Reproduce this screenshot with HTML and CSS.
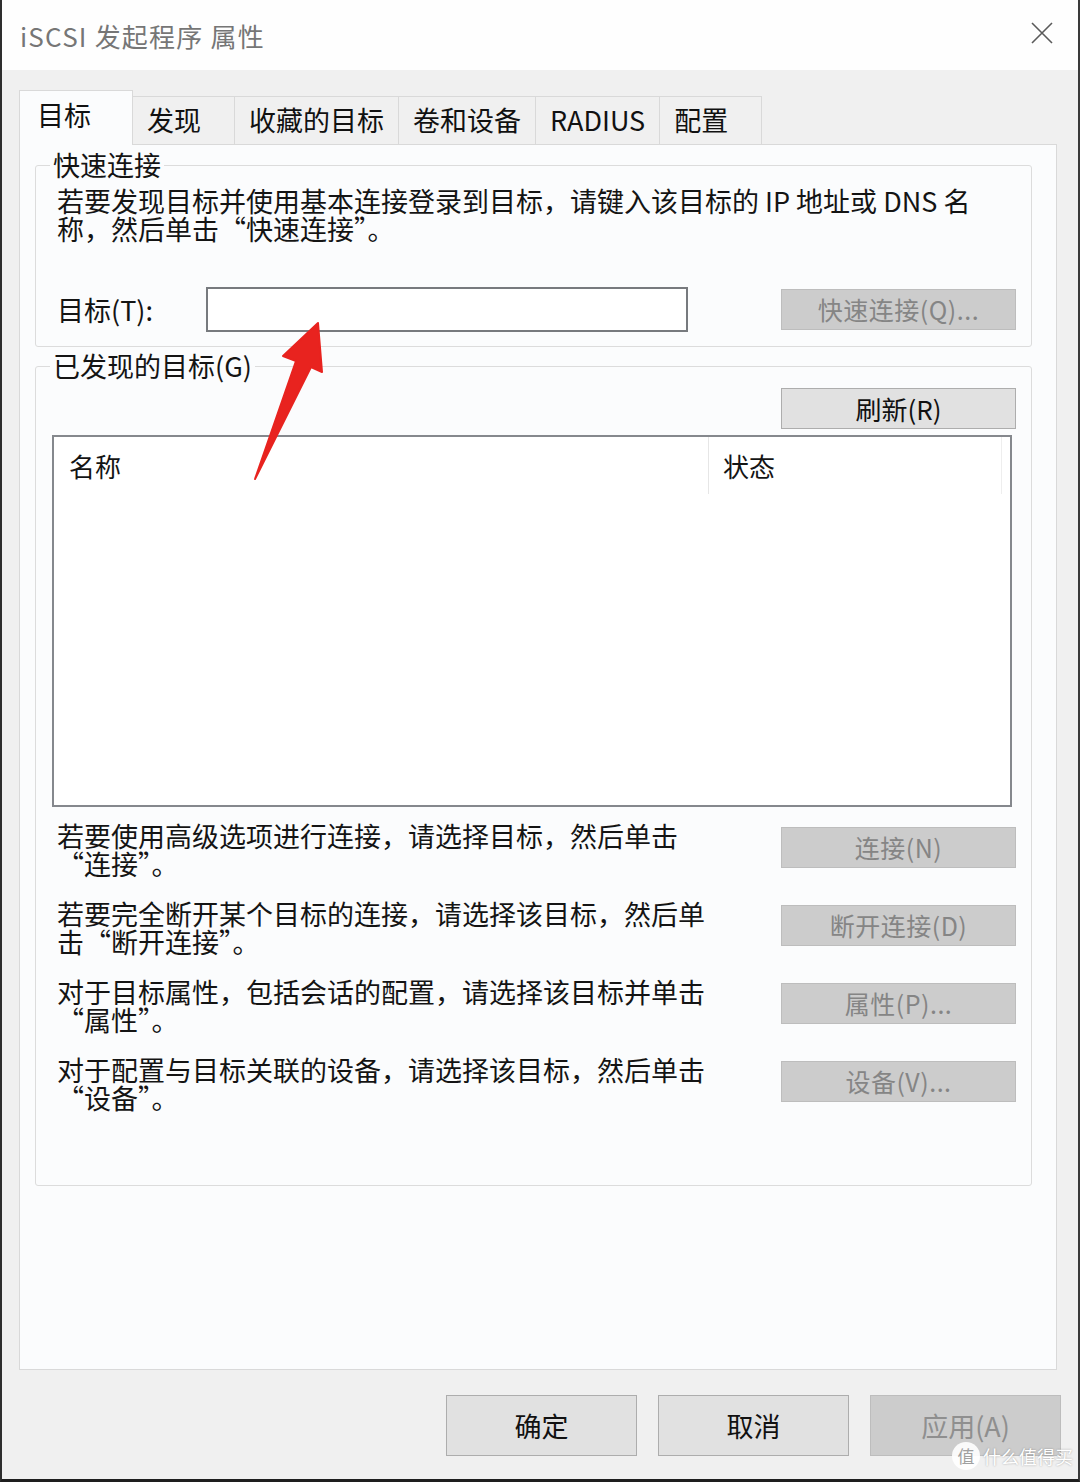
FILE: index.html
```html
<!DOCTYPE html>
<html lang="zh-CN">
<head>
    <meta charset="UTF-8">
    <meta name="viewport" content="width=device-width, initial-scale=1.0">
    <title>iSCSI 发起程序 属性</title>
    <link rel="stylesheet" href="styles.css">
</head>
<body>

<div class="window">
    <div class="titlebar">
        <span class="title">iSCSI 发起程序 属性</span>
        <svg class="close" width="24" height="24" viewBox="0 0 24 24">
            <path d="M2 2 L22 22 M22 2 L2 22" stroke="#5a5a5a" stroke-width="1.6" fill="none"/>
        </svg>
    </div>

    <!-- onglets -->
    <div class="tabs">
        <div class="tab active">目标</div>
        <div class="tab">发现</div>
        <div class="tab">收藏的目标</div>
        <div class="tab">卷和设备</div>
        <div class="tab">RADIUS</div>
        <div class="tab wide">配置</div>
    </div>

    <div class="panel">
        <fieldset class="group quick">
            <legend>快速连接</legend>
            <p class="intro">
                <span class="line">若要发现目标并使用基本连接登录到目标，请键入该目标的 IP 地址或 DNS 名</span>
                <span class="line">称，然后单击“快速连接”。</span>
            </p>
            <div class="target-row">
                <label class="target-label">目标(T):</label>
                <input class="target-input" type="text">
                <button class="btn disabled quick-btn">快速连接(Q)...</button>
            </div>
        </fieldset>

        <fieldset class="group discovered">
            <legend>已发现的目标(G)</legend>
            <div class="refresh-row">
                <button class="btn refresh">刷新(R)</button>
            </div>
            <div class="list">
                <div class="list-head">
                    <div class="col col-name">名称</div>
                    <div class="col col-status">状态</div>
                </div>
            </div>

            <div class="actions">
                <div class="action">
                    <p><span class="line">若要使用高级选项进行连接，请选择目标，然后单击</span><span class="line">“连接”。</span></p>
                    <button class="btn disabled">连接(N)</button>
                </div>
                <div class="action">
                    <p><span class="line">若要完全断开某个目标的连接，请选择该目标，然后单</span><span class="line">击“断开连接”。</span></p>
                    <button class="btn disabled">断开连接(D)</button>
                </div>
                <div class="action">
                    <p><span class="line">对于目标属性，包括会话的配置，请选择该目标并单击</span><span class="line">“属性”。</span></p>
                    <button class="btn disabled">属性(P)...</button>
                </div>
                <div class="action">
                    <p><span class="line">对于配置与目标关联的设备，请选择该目标，然后单击</span><span class="line">“设备”。</span></p>
                    <button class="btn disabled">设备(V)...</button>
                </div>
            </div>
        </fieldset>
    </div>

    <div class="footer">
        <button class="btn big">确定</button>
        <button class="btn big">取消</button>
        <button class="btn big disabled">应用(A)</button>
    </div>

    <!-- flèche rouge vers le champ cible -->
    <svg class="arrow" width="100" height="180" viewBox="0 0 100 180">
        <polygon points="78,13 82,62 71,57 15,169 56,51 43,46" fill="#e8231f" stroke="#e8231f" stroke-width="2" stroke-linejoin="round"/>
    </svg>

    <div class="watermark">
        <span class="wm-logo">值</span>
        <span class="wm-text">什么值得买</span>
    </div>
</div>

</body>
</html>
```

FILE: styles.css
```css
body {
    margin: 0;
    background: #f0f0f0;
    font-family: "Noto Sans CJK SC", "Noto Sans", sans-serif;
    color: #141414;
}

.window {
    position: relative;
    width: 1080px;
    height: 1482px;
    box-sizing: border-box;
    border-left: 2px solid #2e2e2e;
    border-right: 2px solid #3a3a3a;
    border-bottom: 3px solid #1e1e1e;
    background: #f0f0f0;
    overflow: hidden;
}

/* barre de titre */
.titlebar {
    height: 70px;
    background: #fefefe;
    display: flex;
    align-items: center;
    justify-content: space-between;
    padding: 0 24px 0 18px;
}

.title {
    font-size: 26px;
    letter-spacing: 1.2px;
    color: #767676;
}

.close {
    margin-top: -4px;
}

/* onglets */
.tabs {
    display: flex;
    align-items: flex-end;
    height: 54px;
    margin: 20px 0 0 17px;
}

.tab {
    height: 48px;
    min-width: 102px;
    box-sizing: border-box;
    padding: 0 14px;
    border: 1px solid #d9d9d9;
    border-bottom: none;
    border-left: none;
    background: #f0f0f0;
    font-size: 27px;
    line-height: 46px;
    color: #111;
}

.tab.active {
    position: relative;
    z-index: 1;
    width: 114px;
    height: 55px;
    margin-bottom: -1px;
    padding-left: 17px;
    border-left: 1px solid #d9d9d9;
    background: #fbfcfd;
    line-height: 48px;
}

.tab.wide {
    width: 102px;
}

/* panneau */
.panel {
    width: 1038px;
    box-sizing: border-box;
    margin-left: 17px;
    border: 1px solid #d9d9d9;
    background: #fbfcfd;
    padding: 5px 24px 183px 15px;
}

.group {
    margin: 0;
    padding: 0 15px 14px 21px;
    border: 1px solid #dcdcdc;
    border-radius: 3px;
    min-inline-size: 0;
}

.group legend {
    margin-left: -7px;
    padding: 0 3px;
    font-size: 27px;
    line-height: 30px;
}

.group.discovered {
    margin-top: 4px;
    padding: 0 15px 73px 16px;
}

.group.discovered legend {
    margin-left: -2px;
}

.line {
    display: block;
}

.intro {
    margin: 7px 0 0;
    font-size: 27px;
    line-height: 28px;
    white-space: nowrap;
}

.target-row {
    display: flex;
    align-items: center;
    margin-top: 44px;
}

.target-label {
    width: 149px;
    font-size: 27px;
}

.target-input {
    width: 482px;
    height: 45px;
    box-sizing: border-box;
    border: 2px solid #777a7e;
    background: #fff;
    margin: 0;
}

/* boutons */
.btn {
    width: 235px;
    height: 41px;
    box-sizing: border-box;
    padding: 0;
    border: 1px solid #adadad;
    background: #e1e1e1;
    font-family: inherit;
    font-size: 26px;
    line-height: 1;
    color: #111;
}

.btn.disabled {
    background: #cccccc;
    border-color: #bdbdbd;
    color: #858585;
    font-size: 25px;
    letter-spacing: 0.5px;
}

.quick-btn {
    margin-left: auto;
}

.refresh-row {
    display: flex;
    justify-content: flex-end;
    padding-top: 7px;
}

/* liste des cibles */
.list {
    height: 372px;
    box-sizing: border-box;
    margin: 6px 4px 0 0;
    border: 2px solid #85888d;
    background: #fff;
}

.list-head {
    display: flex;
    height: 57px;
    align-items: stretch;
}

.col {
    font-size: 26px;
    line-height: 57px;
}

.col-name {
    width: 655px;
    padding-left: 15px;
    box-sizing: border-box;
    border-right: 1px solid #e6e6e6;
}

.col-status {
    width: 293px;
    padding-left: 14px;
    box-sizing: border-box;
    border-right: 1px solid #eeeeee;
}

.actions {
    display: flex;
    flex-direction: column;
    gap: 22px;
    padding: 15px 0 0 5px;
}

.action {
    display: flex;
    align-items: center;
    justify-content: space-between;
}

.action p {
    margin: 0;
    font-size: 27px;
    line-height: 28px;
    white-space: nowrap;
}

.action .btn {
    margin-top: -6px;
}

/* boutons du bas */
.footer {
    display: flex;
    justify-content: flex-end;
    gap: 21px;
    margin: 25px 17px 0 0;
}

.btn.big {
    width: 191px;
    height: 61px;
    font-size: 27px;
}

.btn.big.disabled {
    color: #8f8f8f;
    letter-spacing: 0;
}

.arrow {
    position: absolute;
    left: 238px;
    top: 310px;
}

.watermark {
    position: absolute;
    right: 5px;
    bottom: 9px;
    display: flex;
    align-items: center;
    gap: 3px;
    color: #fff;
}

.wm-logo {
    width: 28px;
    height: 28px;
    border-radius: 50%;
    background: rgba(255, 255, 255, 0.9);
    color: #a0a0a0;
    font-size: 17px;
    line-height: 28px;
    text-align: center;
}

.wm-text {
    font-size: 18px;
    text-shadow: 0 0 2px rgba(0, 0, 0, 0.35);
}
```
